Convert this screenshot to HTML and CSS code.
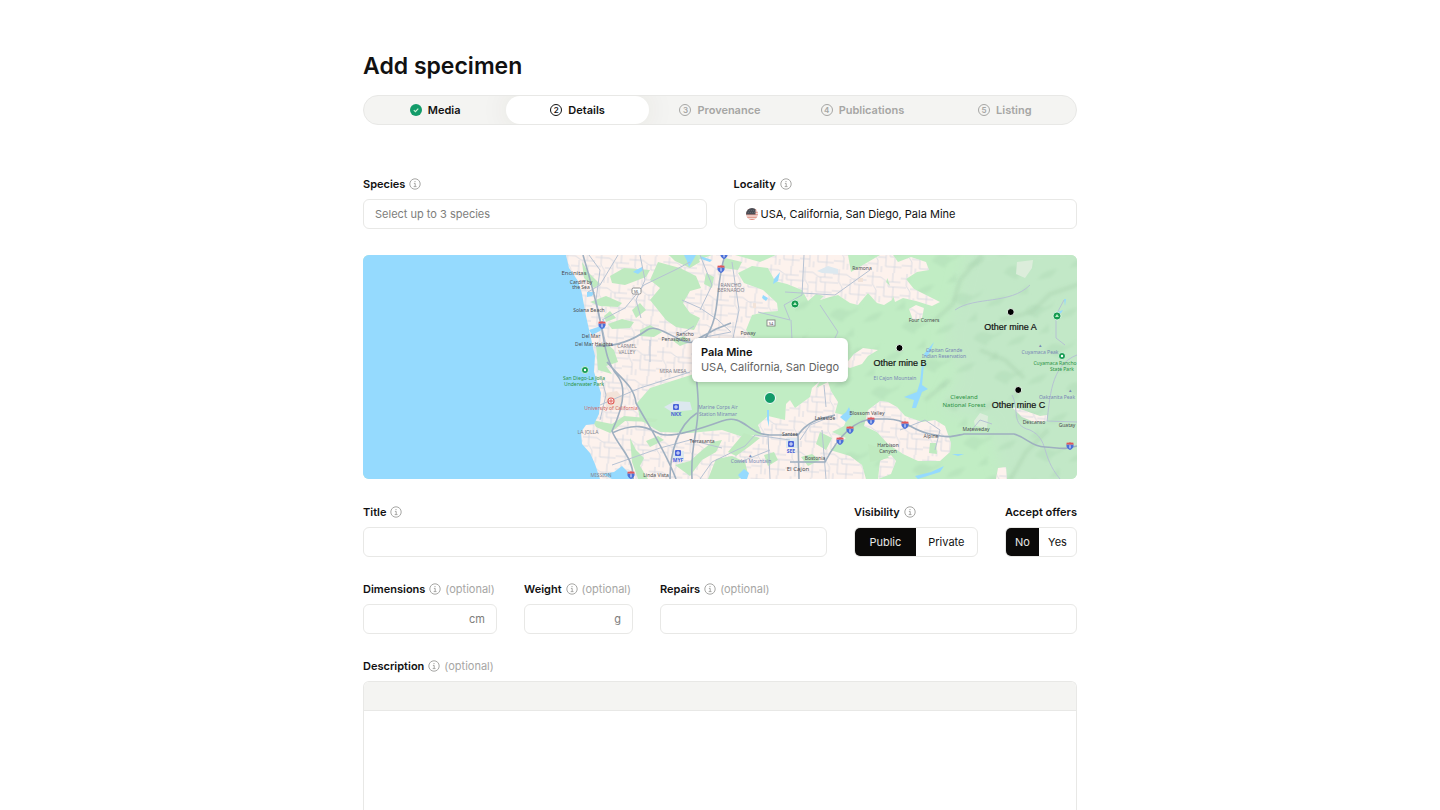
FILE: index.html
```
<!DOCTYPE html>
<html lang="en">
<head>
<meta charset="utf-8">
<title>Add specimen</title>
<link rel="stylesheet" href="styles.css">
</head>
<body>
<svg class="defs" aria-hidden="true">
  <symbol id="info" viewBox="0 0 12 12"><g fill="none" stroke="currentColor" stroke-width="1"><circle cx="6" cy="6" r="5.2"/><path d="M4.9 5.4H6.2V8.6M4.7 8.6H7.5"/></g><circle cx="6" cy="3.6" r=".7" fill="currentColor"/></symbol>
</svg>
<main class="page">
  <h1 class="title">Add specimen</h1>
  <nav class="steps" aria-label="Steps">
    <button class="step done" type="button"><svg class="icon" viewBox="0 0 12 12"><circle cx="6" cy="6" r="6" fill="#129b69"/><path d="M3.8 6.2 5.4 7.7 8.3 4.6" fill="none" stroke="#c8f3d5" stroke-width="1.1"/></svg>Media</button>
    <button class="step active" type="button" aria-current="step"><span class="num">2</span>Details</button>
    <button class="step" type="button"><span class="num">3</span>Provenance</button>
    <button class="step" type="button"><span class="num">4</span>Publications</button>
    <button class="step" type="button"><span class="num">5</span>Listing</button>
  </nav>
  <form class="form">
    <div class="row place">
      <div class="field grow">
        <div class="label"><label for="species">Species</label><svg class="icon"><use href="#info"/></svg></div>
        <input class="input" id="species" type="text" placeholder="Select up to 3 species">
      </div>
      <div class="field grow">
        <div class="label"><label for="locality">Locality</label><svg class="icon"><use href="#info"/></svg></div>
        <div class="input with-flag">
          <svg class="icon flag" viewBox="0 0 12 12"><clipPath id="fc"><circle cx="6" cy="6" r="6"/></clipPath><g clip-path="url(#fc)"><path fill="#f0dcd7" d="M0 0h12v12H0z"/><path stroke="#e0897c" stroke-width="1.1" d="M0 1.6h12M0 4.2h12M0 6.8h12M0 9.2h12M0 11.500h12"/><path fill="#4a4d55" d="M0 0h9.500v6.600H0z"/><path stroke="#8d9096" stroke-width=".6" stroke-dasharray=".6 1.4" d="M1 2.500h8M2 4.500h7"/></g></svg>
          <input class="bare" id="locality" type="text" value="USA, California, San Diego, Pala Mine">
        </div>
      </div>
    </div>

    <div class="map">
      <svg class="map-art" viewBox="363 255 714 224" preserveAspectRatio="xMidYMid slice" role="img" aria-label="Map of San Diego County">
        <defs>
          <pattern id="streets" width="34" height="30" patternUnits="userSpaceOnUse" patternTransform="rotate(4)"><path d="M0 5H14L20 9H34M6 0V12L10 18V30M18 9V24H34M0 22H10M26 0V9M27 14V30M10 15H18M0 14H6M14 24V30M22 9V14H34" fill="none" stroke="#d2d7e1" stroke-width=".8"/></pattern>
          <pattern id="relief" width="58" height="44" patternUnits="userSpaceOnUse" patternTransform="rotate(-28)"><path d="M4 8Q14 2 20 10T38 12L30 17Q18 16 12 20ZM30 30Q40 24 54 30L44 34ZM6 34 20 30 16 38Z" fill="#a9d6b0" opacity=".35" filter="url(#haze)"/></pattern>
          <filter id="haze"><feGaussianBlur stdDeviation="1.500"/></filter>
          <filter id="soft" x="-20%" y="-20%" width="140%" height="140%"><feGaussianBlur stdDeviation="7"/></filter>
          <symbol id="shield" viewBox="0 0 8 8"><path fill="#4a6fd8" d="M.4 2.500h7.200C8 5.500 6 7.200 4 8 2 7.200 0 5.500.4 2.500Z"/><path fill="#e0565a" d="M.8.5 2 .8 4 .2 6 .8 7.200.5 7.700 2.500H.3Z"/><path stroke="#fff" stroke-width=".9" d="M4 3.200v3.200"/></symbol>
          <path id="urban" d="M560 255H668L690 263 712 255H735L760 262 776 255H848L851 272 880 255H888L893 262 886 282 894 290 892 300 884 305 877 303 868 293 858 305 850 303 838 295 830 297 820 300 824 296 816 294 808 301 802 290 787 284 775 281 768 268 752 266 738 273 744 283 763 290 777 303 778 311 765 312 752 315 746 330 757 345 745 368 694 374 650 388 637 403 640 420 660 432 690 433 722 430 740 436 762 435 758 425 768 416 785 420 786 404 790 400 795 408 810 397 812 388 820 381 816 388 828 382 831 391 838 402 835 413 848 416 844 426 832 432 846 438 830 450 850 456 862 465 866 479H560ZM880 255H893L898 262 911 257 926 262 929 270 917 272 906 279 914 289 940 302 932 306 916 301 903 298 895 302 892 292 888 280ZM909 309 916 305 924 308 922 318 913 320ZM844 366 854 354 863 348 878 350 868 356 862 364 850 368ZM880 401 888 402 897 407 905 416 922 422 935 420 945 426 951 443 950 452 940 461 918 461 903 454 888 444 877 432 864 426 868 410ZM1012 407 1023 410 1040 416 1047 415 1047 421 1034 422 1022 417ZM998 468 1006 467 1007 479H996ZM880 461 891 455 896 461 891 474 878 479Z"/>
        </defs>
        <path fill="#c1edc4" d="M363 255h714v224H363z"/>
        <path fill="#c2e8c7" filter="url(#soft)" d="M968 245 955 300 945 340 960 370 940 410 990 425 1005 490H1090V240Z"/>
        <path fill="url(#relief)" d="M780 255h297v224H840Z"/>
        <g fill="none" stroke="#add5b2" stroke-width="4" opacity=".5" filter="url(#haze)"><path d="M982 255 960 280 953 304 935 320M1077 285 1050 294 1032 312 1000 320M1010 480 1026 452 1048 430M980 350 1005 360 1024 378M925 400 950 380"/></g>
        <path fill="#dceddb" d="M1017 262 1033 260 1032 268 1025 278 1016 274ZM974 421 980 413 988 416 987 428 975 426Z"/>
        <use href="#urban" fill="#fdf2ed"/><use href="#urban" fill="url(#streets)"/>
        <g fill="#bfeac0">
          <path d="M669 255H697L700 262 690 268 675 261ZM658 262 680 268 696 276 701 288 690 291 683 303 690 313 700 318 694 330 676 327 666 320 650 300 660 288 650 280ZM610 276 624 268 650 270 646 277 625 285 612 283ZM590 302 606 296 622 303 618 307 600 306ZM632 310 640 303 646 310 636 318ZM608 324 622 319 634 322 630 328 612 329ZM582 262 589 273 600 284 594 288 584 278Z"/>
          <path d="M596 346 606 343 614 350 618 362 606 366 612 374 598 370ZM604 316 610 311 616 318 606 322ZM640 330 650 325 662 332 654 337 640 336ZM672 340 684 336 690 342 680 346ZM725 258 742 262 738 270 722 268ZM706 273 714 277 712 288 704 284ZM592 420 612 424 624 416 658 419 655 422 625 421 610 433 596 427ZM630 438 636 450 644 458 640 466 648 479H638L632 462ZM646 441 658 436 664 440 650 447ZM675 465 690 461 700 452 712 442 722 440 716 452 702 460 690 476ZM744 433 760 438 750 446 736 456 728 452ZM716 459 732 456 745 462 748 474 738 479H708ZM764 455 774 452 778 460 768 466ZM820 432 832 438 826 450 816 444ZM801 457 812 454 820 460 808 466ZM930 443 936 443 937 454 929 453ZM868 444 880 448 889 458 870 462Z"/>
        </g>
        <path fill="#f2e3d9" d="M605 393 617 391 623 398 621 410 606 410ZM753 303h3v5h-3zM858 278h5v4h-5z"/>
        <path fill="#dce8ef" d="M664 407 675 401 690 402 692 410 672 412ZM672 451h12v9h-12zM786 438h12v10h-12zM817 271 828 266 838 269 838 274 822 273Z"/>
        <g fill="#95dafe">
          <path d="M363 255H566L569 268 578 281 582 294 586 316 590 334 595 356 594 372 598 384 601 393 599 414 594 424 586 425 581 432 582 444 590 453 595 464 600 479H363Z"/>
          <path d="M589 330 598 327 604 319 605 328 598 332 592 335ZM614 472 622 466 628 472 634 479H612L602 474ZM636 270l6-3 1 3-5 4-5-2ZM684 255h12l-4 7-3 5-2-6ZM700 256l12 4-2 2-9-3ZM587 292h8l-3 4-5 1ZM774 279l6-7-2 9-5 3ZM763 295l5 3-2 3-4-3ZM840 417l6-5 3-5 3 8-6 7-5-4ZM738 475l6-6 5 4-2 6h-6ZM922 364h2l-2 21 6 4-6 3-6 16h-4l2-8-10-3 13-5 3-10ZM924 354l10-12-4 10-4 6ZM1054 313l9-3-3 5ZM1064 299h2l-1 7ZM915 476l16-4 13-6-4 6-16 5-6 2ZM952 454h12l-6 2ZM767 410l2 0v17l-2-8Z"/>
        </g>
        <g fill="none" stroke="#b6c2d3" stroke-width="1">
          <path d="M589 255 600 270 596 300 606 345M618 255 600 285 588 292M602 320 625 308 644 285 675 270 690 262M640 255 645 280 636 300 641 318M650 340 650 362M682 300 700 308 718 320 731 332 700 338M700 255 712 285 700 310M732 262 739 310 733 338M758 312 790 320 784 305 802 295 804 255M791 320 792 340M785 292 835 295 870 270M820 305 838 332 830 348M694 326 675 338M600 405 640 388 690 372M612 465 660 448 690 440 722 448M600 420 606 395 602 380M700 479 712 462 745 446 755 435 790 440M768 435 770 479M800 440 810 425 835 415M824 385 826 407M740 462 770 450M822 430 826 479"/>
          <path d="M1060 479C1040 455 1050 440 1030 430C1010 425 1020 410 1012 395M1077 355C1050 365 1050 400 1047 421L1077 422M955 310C975 296 1010 305 1030 285M900 430 925 420 940 430 935 450M1065 345 1056 338V315L1064 300M970 432 980 420 992 424"/>
        </g>
        <g fill="none" stroke="#9eafc0" stroke-width="1.600">
          <path d="M583 255C592 285 597 305 601 325S606 362 617 375S622 410 612 431C618 447 634 457 633 479M596 346C620 347 636 338 647 330S680 345 692 342L716 329 731 323M725 255C714 290 722 316 704 340C692 362 697 375 698 398C700 430 690 440 692 479M607 362C622 380 634 386 636 403C648 425 664 448 676 479M697 413C678 425 670 452 670 479M612 433C640 420 650 430 660 434S700 429 722 421S748 435 770 435L798 435C810 418 826 418 835 415M798 435 799 479M790 462H825C834 445 850 420 873 419L885 419C905 418 910 430 930 434S950 437 964 434H1014C1028 438 1030 446 1045 447S1065 450 1077 446"/>
        </g>
        <g><use href="#shield" x="717" y="265" width="8" height="8"/><use href="#shield" x="720" y="251" width="8" height="8"/><use href="#shield" x="598" y="321" width="8" height="8"/><use href="#shield" x="627" y="471" width="8" height="8"/><use href="#shield" x="836" y="437" width="8" height="8"/><use href="#shield" x="846" y="426" width="8" height="8"/><use href="#shield" x="867" y="417" width="8" height="8"/><use href="#shield" x="901" y="421" width="8" height="8"/><use href="#shield" x="1066" y="442" width="8" height="8"/></g>
        <g fill="#fff" stroke="#777" stroke-width=".8"><rect x="632" y="288" width="9" height="6" rx="1.500"/><rect x="767" y="320" width="8" height="6"/></g>
        <g fill="#159a50" stroke="#eafbed" stroke-width=".8"><circle cx="795" cy="304" r="4"/><circle cx="1057" cy="316" r="4"/><circle cx="585" cy="370" r="3.500"/><circle cx="1062" cy="356" r="3.500"/></g>
        <path d="M793 305l2-3 2 3ZM1055 317l2-3 2 3Z" fill="#b9eec4"/><g fill="#fff"><circle cx="585" cy="370" r="1.200"/><circle cx="1062" cy="356" r="1.200"/></g>
        <circle cx="611" cy="401" r="3" fill="#fff" stroke="#df605b" stroke-width="1.200"/><path d="M611 399v4M609 401h4" stroke="#df605b"/>
        <g fill="#4a63d9"><rect x="673" y="404" width="6" height="6" rx="1"/><rect x="675" y="450" width="6" height="6" rx="1"/><rect x="788" y="441" width="6" height="6" rx="1"/></g>
        <path d="M676 405v4M674 407h4M678 451v4M676 453h4M791 442v4M789 444h4" stroke="#fff" stroke-width=".8"/>
        <g class="town">
          <text x="574" y="275" class="big">Encinitas</text><text x="581" y="284">Cardiff by</text><text x="581" y="289">the Sea</text><text x="589" y="312">Solana Beach</text><text x="591" y="338">Del Mar</text><text x="594" y="346">Del Mar Heights</text><text x="685" y="336">Rancho</text><text x="676" y="341">Penasquitos</text><text x="748" y="335">Poway</text><text x="862" y="270">Ramona</text><text x="924" y="322">Four Corners</text><text x="702" y="443">Terrasanta</text><text x="790" y="436">Santee</text><text x="825" y="420">Lakeside</text><text x="867" y="415">Blossom Valley</text><text x="815" y="460">Bostonia</text><text x="798" y="471" class="big">El Cajon</text><text x="888" y="447">Harbison</text><text x="888" y="453">Canyon</text><text x="931" y="438">Alpine</text><text x="976" y="431">Mateweday</text><text x="1034" y="424">Descanso</text><text x="1067" y="427">Guatay</text><text x="656" y="477">Linda Vista</text><text x="636" y="293" class="tiny">S6</text><text x="771" y="325" class="tiny">S4</text>
        </g>
        <g class="district"><text x="627" y="348">CARMEL</text><text x="627" y="354">VALLEY</text><text x="731" y="287">RANCHO</text><text x="731" y="292">BERNARDO</text><text x="673" y="373">MIRA MESA</text><text x="588" y="434">LA JOLLA</text><text x="601" y="477">MISSION</text></g>
        <g class="reserve"><text x="718" y="409">Marine Corps Air</text><text x="718" y="416">Station Miramar</text><text x="751" y="463">Cowles Mountain</text><text x="750" y="457">▴</text><text x="944" y="352">Capitan Grande</text><text x="944" y="358">Indian Reservation</text><text x="895" y="380">El Cajon Mountain</text><text x="1040" y="354">Cuyamaca Peak</text><text x="1057" y="399">Oakzanita Peak</text><text x="1070" y="392">▴</text><text x="1040" y="347">▴</text></g>
        <g class="park"><text x="584" y="380">San Diego-La Jolla</text><text x="584" y="386">Underwater Park</text><text x="1055" y="365">Cuyamaca Rancho</text><text x="1062" y="371">State Park</text><text x="964" y="399" class="big">Cleveland</text><text x="964" y="407" class="big">National Forest</text></g>
        <text x="611" y="410" class="campus">University of California</text>
        <g class="airport"><text x="676" y="416">NKX</text><text x="678" y="462">MYF</text><text x="791" y="453">SEE</text></g>
      </svg>
      <div class="mine mine-a"><i class="dot"></i>Other mine A</div>
      <div class="mine mine-b"><i class="dot"></i>Other mine B</div>
      <div class="mine mine-c"><i class="dot"></i>Other mine C</div>
      <div class="pin"></div>
      <div class="popup"><strong>Pala Mine</strong><span>USA, California, San Diego</span></div>
    </div>

    <div class="row">
      <div class="field grow">
        <div class="label"><label for="name">Title</label><svg class="icon"><use href="#info"/></svg></div>
        <input class="input" id="name" type="text">
      </div>
      <div class="field" role="radiogroup" aria-labelledby="vis">
        <div class="label"><span id="vis">Visibility</span><svg class="icon"><use href="#info"/></svg></div>
        <div class="toggle wide">
          <label class="option"><input type="radio" name="visibility" checked>Public</label>
          <label class="option"><input type="radio" name="visibility">Private</label>
        </div>
      </div>
      <div class="field" role="radiogroup" aria-labelledby="off">
        <div class="label"><span id="off">Accept offers</span></div>
        <div class="toggle">
          <label class="option"><input type="radio" name="offers" checked>No</label>
          <label class="option"><input type="radio" name="offers">Yes</label>
        </div>
      </div>
    </div>

    <div class="row">
      <div class="field dimensions">
        <div class="label"><label for="dim">Dimensions</label><svg class="icon"><use href="#info"/></svg><span class="optional">(optional)</span></div>
        <input class="input unit" id="dim" type="text" placeholder="cm">
      </div>
      <div class="field weight">
        <div class="label"><label for="weight">Weight</label><svg class="icon"><use href="#info"/></svg><span class="optional">(optional)</span></div>
        <input class="input unit" id="weight" type="text" placeholder="g">
      </div>
      <div class="field grow">
        <div class="label"><label for="repairs">Repairs</label><svg class="icon"><use href="#info"/></svg><span class="optional">(optional)</span></div>
        <input class="input" id="repairs" type="text">
      </div>
    </div>

    <div class="field description">
      <div class="label"><label for="desc">Description</label><svg class="icon"><use href="#info"/></svg><span class="optional">(optional)</span></div>
      <div class="editor"><div class="toolbar"></div><textarea class="text" id="desc"></textarea></div>
    </div>
  </form>
</main>
</body>
</html>
```
FILE: styles.css
```
* { box-sizing: border-box; }
body { margin: 0; background: #fff; color: #111; font: 400 11px/18px Inter, Arial, sans-serif; }
button, input, textarea { font: inherit; color: inherit; }
.defs { position: absolute; width: 0; height: 0; }
.page { display: flex; flex-direction: column; min-height: 100vh; max-width: 754px; margin: 0 auto; padding: 52px 20px 0; }
.title { margin: 0 0 15px; font: 600 23px/28px Inter, sans-serif; }
.icon { width: 12px; height: 12px; flex: none; }

.steps { display: flex; height: 30px; margin-bottom: 50px; border: 1px solid #e8e8e6; border-radius: 15px; background: #f4f4f2; overflow: hidden; }
.step { flex: 1; display: flex; align-items: center; justify-content: center; gap: 6px; padding: 0; border: 0; border-radius: 14px; background: none; color: #a6a6a4; font-weight: 600; }
.step.done, .step.active { color: #111; }
.step.active { background: #fff; box-shadow: 0 0 30px rgba(70, 50, 20, .09); }
.num { display: grid; place-items: center; width: 12px; height: 12px; border: 1px solid; border-radius: 50%; font-size: 8px; line-height: 10px; }

.form { flex: 1; display: flex; flex-direction: column; gap: 23px; }
.row { display: flex; gap: 27px; }
.place { margin-bottom: 3px; }
.field { display: flex; flex-direction: column; gap: 6px; min-width: 0; }
.grow { flex: 1; }
.dimensions { width: 134px; }
.weight { width: 109px; }
.label { display: flex; align-items: center; gap: 4px; height: 18px; font-weight: 600; white-space: nowrap; }
.label .icon, .optional { color: #a6a6a4; }
.optional { font-weight: 400; }
.input { width: 100%; height: 30px; padding: 0 11px; border: 1px solid #e8e8e6; border-radius: 6px; background: #fff; outline: 0; }
.input::placeholder { color: #7d7d7b; opacity: 1; }
.unit { text-align: right; }
.with-flag { display: flex; align-items: center; gap: 3px; }
.bare { flex: 1; min-width: 0; padding: 0; border: 0; background: none; outline: 0; }

.toggle { display: flex; height: 30px; border: 1px solid #e8e8e6; border-radius: 6px; overflow: hidden; }
.option { flex: 1 1 auto; display: flex; align-items: center; justify-content: center; padding: 0 8px; }
.wide .option { width: 61px; }
.option input { position: absolute; opacity: 0; }
.option:has(:checked) { background: #0b0a09; color: #e8e8e6; }

.map { position: relative; height: 224px; margin-bottom: 1px; border-radius: 6px; overflow: hidden; }
.map-art { display: block; width: 100%; height: 100%; font-family: "Noto Sans", sans-serif; font-size: 5px; text-anchor: middle; }
.big { font-size: 6px; }
.tiny { font-size: 4px; }
.town { fill: #4c4c50; }
.district { fill: #82828a; }
.reserve { fill: #7987b5; }
.park { fill: #2b9345; }
.campus { fill: #d26762; }
.airport { fill: #4a63d9; font-weight: 700; }
.mine { position: absolute; display: flex; flex-direction: column; align-items: center; transform: translate(-50%, -4px); font: 500 9px/12px "Liberation Sans", Arial, sans-serif; -webkit-text-stroke: .2px #111; }
.dot { width: 8px; height: 8px; margin-bottom: 5px; border: 1px solid #e9f8eb; border-radius: 50%; background: #000; }
.mine-a { left: 90.700%; top: 57px; }
.mine-b { left: 75.200%; top: 93px; }
.mine-c { left: 91.800%; top: 135px; }
.pin { position: absolute; left: 57%; top: 143px; width: 12px; height: 12px; border: 1px solid #fff; border-radius: 50%; background: #129b69; transform: translate(-50%, -50%); }
.popup { position: absolute; left: 57%; top: 83px; transform: translateX(-50%); display: flex; flex-direction: column; padding: 7px 9px; border-radius: 6px; background: #fff; box-shadow: 0 1px 5px rgba(0, 0, 0, .2); line-height: 15px; white-space: nowrap; }
.popup strong { font-weight: 600; }
.popup span { color: #62625f; }

.description { flex: 1; }
.editor { flex: 1; display: flex; flex-direction: column; min-height: 120px; border: 1px solid #e8e8e6; border-bottom: 0; border-radius: 6px 6px 0 0; overflow: hidden; }
.toolbar { height: 29px; border-bottom: 1px solid #e8e8e6; background: #f4f4f2; }
.text { flex: 1; padding: 8px 11px; border: 0; resize: none; outline: 0; }
```
